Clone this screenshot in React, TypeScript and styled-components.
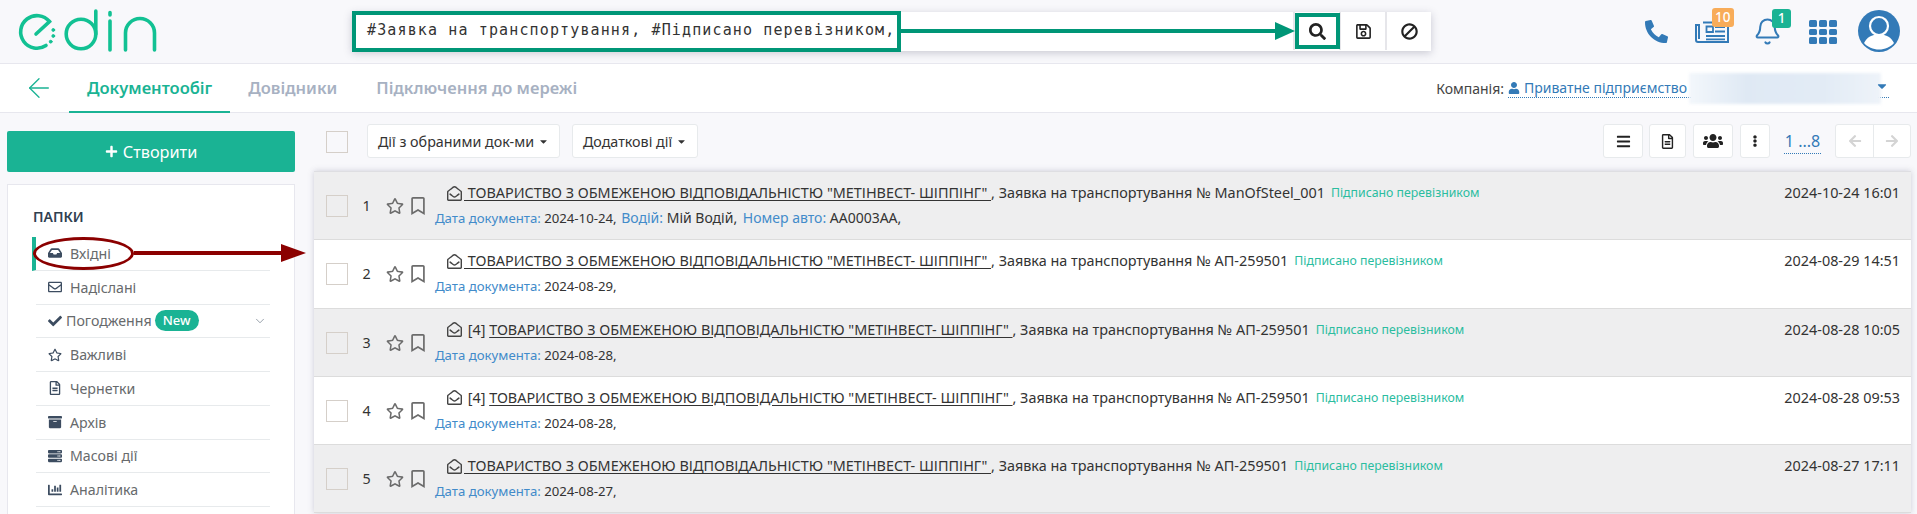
import React from 'react';
import styled, { createGlobalStyle } from 'styled-components';
import {
    FaArchive,
    FaArrowLeft,
    FaArrowRight,
    FaBan,
    FaBars,
    FaCaretDown,
    FaChartBar,
    FaCheck,
    FaEllipsisV,
    FaInbox,
    FaPhoneAlt,
    FaPlus,
    FaRegBookmark,
    FaRegEnvelope,
    FaRegEnvelopeOpen,
    FaRegFileAlt,
    FaRegSave,
    FaRegStar,
    FaSearch,
    FaServer,
    FaUser,
    FaUsers,
} from 'react-icons/fa';
import { ArrowLeft, Bell, ChevronDown } from 'lucide-react';

const GREEN = '#1ab394';
const LINK = '#337ab7';
const ANNOT_GREEN = '#009677';
const ANNOT_RED = '#8b0000';

const Global = createGlobalStyle`
    html, body {
        margin: 0;
        height: 514px;
        overflow: hidden;
        background: #f8f8fb;
        font-family: "Noto Sans", "Open Sans", sans-serif;
        font-size: 14px;
        color: #333;
    }
    * { box-sizing: border-box; }
`;

const Page = styled.div`
    width: 1917px;
    height: 514px;
    overflow: hidden;
`;

/* ---------- header ---------- */

const Header = styled.header`
    height: 64px;
    border-bottom: 1px solid #e7e7ee;
    display: flex;
    align-items: flex-start;
    padding-left: 10px;
`;

const LogoSvg = styled.svg`
    width: 160px;
    height: 60px;
    flex: none;
`;

const SearchBar = styled.div`
    position: relative;
    width: 1079px;
    height: 39px;
    margin: 12px 0 0 182px;
    display: flex;
    background: #fff;
    box-shadow: 0 2px 8px rgba(60, 60, 90, 0.25);
`;

const SearchText = styled.div`
    flex: 1;
    padding-left: 15px;
    line-height: 37px;
    font-family: "DejaVu Sans Mono", monospace;
    font-size: 15px;
    letter-spacing: 1.13px;
    white-space: pre;
`;

const SearchBtn = styled.div`
    width: 46px;
    height: 38px;
    border-left: 2px solid #e6e6ea;
    display: flex;
    align-items: center;
    justify-content: center;
    font-size: 17px;
    color: #222;
    background: #fff;

    svg.flip {
        transform: scaleX(-1);
    }
`;

const SearchHighlight = styled.div`
    position: absolute;
    left: 0;
    top: -1px;
    width: 549px;
    height: 41px;
    border: 4px solid ${ANNOT_GREEN};
`;

const SearchArrow = styled.div`
    position: absolute;
    left: 549px;
    top: 17px;
    width: 376px;
    height: 4px;
    background: ${ANNOT_GREEN};
`;

const SearchArrowHead = styled.div`
    position: absolute;
    left: 374px;
    top: -7px;
    border-left: 20px solid ${ANNOT_GREEN};
    border-top: 9px solid transparent;
    border-bottom: 9px solid transparent;
`;

const SearchBtnHighlight = styled.div`
    position: absolute;
    left: 943px;
    top: 1px;
    width: 45px;
    height: 36px;
    border: 4px solid ${ANNOT_GREEN};
`;

const HeaderIcons = styled.div`
    display: flex;
    align-items: center;
    margin-left: 214px;
    height: 62px;
    color: ${LINK};
`;

const HeaderIcon = styled.div<{ $size: number; $gap: number }>`
    position: relative;
    font-size: ${(p) => p.$size}px;
    margin-left: ${(p) => p.$gap}px;
    display: flex;
`;

const CountBadge = styled.span<{ $color: string; $right: number; $top: number }>`
    position: absolute;
    right: ${(p) => p.$right}px;
    top: ${(p) => p.$top}px;
    min-width: 19px;
    height: 19px;
    padding: 0 3.5px;
    border-radius: 3px;
    background: ${(p) => p.$color};
    color: #fff;
    font-size: 13.5px;
    line-height: 19px;
    text-align: center;
    font-weight: 500;
`;

const NewsSvg = styled.svg`
    width: 34px;
    height: 24px;
`;

const GridIcon = styled.div`
    display: grid;
    grid-template-columns: repeat(3, 8px);
    grid-auto-rows: 6.5px;
    gap: 2px;
    margin-left: 27px;
    margin-top: 2px;

    i {
        background: ${LINK};
        border-radius: 1.5px;
    }
`;

const AvatarSvg = styled.svg`
    width: 42px;
    height: 42px;
    margin-left: 21px;
`;

/* ---------- nav ---------- */

const Nav = styled.nav`
    height: 49px;
    background: #fff;
    border-bottom: 1px solid #e7e7ee;
    display: flex;
    align-items: stretch;
    padding-left: 23px;
    position: relative;
`;

const BackArrow = styled.div`
    display: flex;
    align-items: center;
    color: ${GREEN};
    width: 46px;
`;

const Tab = styled.div<{ $active?: boolean }>`
    padding: 0 18px;
    margin-right: ${(p) => (p.$active ? 0 : 3)}px;
    display: flex;
    align-items: center;
    font-size: 16.5px;
    font-weight: 600;
    color: ${(p) => (p.$active ? GREEN : '#a7b1c2')};
    border-bottom: 2px solid ${(p) => (p.$active ? GREEN : 'transparent')};
    margin-bottom: -1px;
`;

const Company = styled.div`
    margin-left: auto;
    margin-right: 28px;
    display: flex;
    align-items: center;
    gap: 4px;
    font-size: 14px;
    color: #444;
`;

const CompanyLink = styled.div`
    position: relative;
    width: 381px;
    height: 20px;
    display: flex;
    align-items: center;
    gap: 4px;
    color: ${LINK};
    border-bottom: 1px dotted ${LINK};
`;

const CompanyCaret = styled.span`
    position: absolute;
    right: 0;
    top: 1px;
    font-size: 14px;
    display: flex;
`;

const BlurPatch = styled.div`
    position: absolute;
    left: 181px;
    top: -5px;
    width: 192px;
    height: 31px;
    background: linear-gradient(90deg, #f3f7fb, #dfe9f4 30%, #e2ebf5 70%, #eef3f9);
    filter: blur(1.5px);
`;

/* ---------- main ---------- */

const Main = styled.main`
    display: grid;
    grid-template-columns: 314px 1fr;
`;

const Sidebar = styled.aside`
    padding: 18px 19px 0 7px;
`;

const CreateBtn = styled.div`
    height: 41px;
    background: ${GREEN};
    color: #fff;
    border-radius: 2px;
    display: flex;
    align-items: center;
    justify-content: center;
    gap: 5px;
    font-size: 16.3px;
`;

const FolderPanel = styled.div`
    margin-top: 12px;
    background: #fff;
    border: 1px solid #e7e7ee;
    height: 400px;
    padding: 21px 24px 0 24px;
`;

const PanelTitle = styled.div`
    font-size: 14px;
    font-weight: 600;
    color: #2f4050;
    line-height: 22px;
    margin-bottom: 9px;
    margin-left: 1px;
`;

const FolderItem = styled.div<{ $active?: boolean; $tight?: boolean }>`
    position: relative;
    height: 33.75px;
    margin-left: ${(p) => (p.$active ? 0 : 4)}px;
    padding-left: 12px;
    border-left: ${(p) => (p.$active ? `4px solid ${GREEN}` : 'none')};
    border-bottom: 1px solid #e7eaec;
    display: flex;
    align-items: center;
    gap: ${(p) => (p.$tight ? 4 : 8)}px;
    color: #676a6c;
    font-size: 14.2px;

    svg:first-child {
        color: #3c4c60;
        font-size: 14px;
        width: 14px;
    }
`;

const NewBadge = styled.span`
    margin-left: -1px;
    height: 21px;
    padding: 0 8px;
    border-radius: 11px;
    background: ${GREEN};
    color: #fff;
    font-size: 13px;
    font-weight: 500;
    line-height: 21px;
`;

const Chevron = styled.span`
    position: absolute;
    right: 3px;
    top: 2px;
    color: #8f9bab;
    display: flex;
`;

const RedEllipse = styled.div`
    position: absolute;
    left: -3px;
    top: 0;
    width: 101px;
    height: 33px;
    border: 3px solid ${ANNOT_RED};
    border-radius: 50%;
`;

const RedLine = styled.div`
    position: absolute;
    left: 98px;
    top: 14px;
    width: 148px;
    height: 3.5px;
    background: ${ANNOT_RED};
`;

const RedHead = styled.div`
    position: absolute;
    left: 245px;
    top: 7px;
    border-left: 25px solid ${ANNOT_RED};
    border-top: 9px solid transparent;
    border-bottom: 9px solid transparent;
`;

const Content = styled.section`
    padding-right: 7px;
`;

const Toolbar = styled.div`
    height: 58px;
    display: flex;
    align-items: flex-start;
    padding: 11px 0 0 12px;
`;

const Check = styled.div<{ $bg?: string; $top?: number }>`
    width: 22px;
    height: 22px;
    flex: none;
    margin-top: ${(p) => p.$top ?? 0}px;
    border: 1px solid #d5cfc9;
    background: ${(p) => p.$bg || 'transparent'};
`;

const Btn = styled.div<{ $w: number; $gap?: number }>`
    width: ${(p) => p.$w}px;
    height: 34px;
    margin-left: ${(p) => p.$gap ?? 0}px;
    flex: none;
    background: #fff;
    border: 1px solid #e7eaec;
    border-radius: 3px;
    display: flex;
    align-items: center;
    justify-content: center;
    gap: 4px;
    font-size: 14.3px;
    color: #333;
`;

const Caret = styled(FaCaretDown)`
    font-size: 11px;
`;

const Pager = styled.div`
    margin: 5px 0 0 14px;
    width: 37px;
    height: 25px;
    font-size: 16px;
    line-height: 24px;
    white-space: nowrap;
    color: ${LINK};
    border-bottom: 1px dotted ${LINK};
    text-align: center;
`;

const PagerGroup = styled.div`
    margin-left: 14px;
    display: flex;
    height: 34px;
    background: #fff;
    border: 1px solid #e7eaec;
    border-radius: 3px;
    color: #d4d4d4;
    font-size: 14px;
`;

const PagerCell = styled.div<{ $first?: boolean }>`
    width: 37px;
    display: flex;
    align-items: center;
    justify-content: center;
    border-left: ${(p) => (p.$first ? 'none' : '1px solid #e7eaec')};
`;

const DocList = styled.div`
    border-top: 1px solid #dedee2;
    box-shadow: 0 0 6px rgba(80, 80, 110, 0.25);
`;

const Row = styled.div<{ $shaded: boolean }>`
    position: relative;
    height: 68.25px;
    background: ${(p) => (p.$shaded ? '#eeeeef' : '#fff')};
    border-bottom: 1px solid #dcdcdc;
    display: flex;
    align-items: flex-start;
    padding: 23px 0 0 12px;
`;

const Num = styled.div`
    width: 15px;
    margin-left: 11px;
    line-height: 22px;
    font-size: 14.3px;
    color: #333;
    text-align: center;
`;

const RowIcons = styled.div`
    margin-left: 12px;
    width: 49px;
    display: flex;
    align-items: center;
    gap: 5px;
    height: 22px;
    color: #6b6b6b;
    font-size: 18px;
`;

const RowBody = styled.div`
    margin-top: -12px;
    flex: 1;
`;

const TitleLine = styled.div`
    height: 20px;
    line-height: 20px;
    padding-left: 12px;
    display: flex;
    align-items: center;
    white-space: pre;
    font-size: 14.4px;
    color: #333;

    svg {
        font-size: 15px;
        margin-right: 2px;
        color: #444;
    }

    u {
        text-underline-offset: 2px;
    }
`;

const Status = styled.span`
    margin-left: 6px;
    font-size: 12.3px;
    color: #2bbd9f;
`;

const MetaLine = styled.div`
    margin-top: 6px;
    font-size: 13.2px;
    line-height: 18px;
    color: #333;
    white-space: pre;

    b {
        font-weight: 400;
        color: #428bca;
    }
`;

const MetaExtra = styled.span<{ $gap: number }>`
    font-size: 14px;
    margin-left: ${(p) => p.$gap}px;

    b {
        font-size: 14px;
    }
`;

const RowTime = styled.div`
    position: absolute;
    right: 11px;
    top: 11px;
    line-height: 20px;
    font-size: 14.4px;
`;

const Logo = () => (
    <LogoSvg viewBox="0 0 160 60" fill="none" stroke="#12c193" strokeWidth="3.6" strokeLinecap="round">
        <path d="M36 45.5A16.3 16.3 0 1 1 39.5 21.5L26 34" />
        <circle cx="43.3" cy="30" r="1.4" fill="#12c193" strokeWidth="1" />
        <circle cx="43.3" cy="36" r="1.4" fill="#12c193" strokeWidth="1" />
        <circle cx="40.7" cy="41.7" r="1.4" fill="#12c193" strokeWidth="1" />
        <circle cx="71" cy="34" r="14.8" />
        <path d="M85.8 11V34" />
        <path d="M100 12.5V15M100 21V50" />
        <path d="M115.5 50V33A14.5 14.5 0 0 1 144.5 33V50" />
    </LogoSvg>
);

const NewsIcon = () => (
    <NewsSvg viewBox="0 0 34 24" fill="none" stroke="#337ab7" strokeWidth="2">
        <path d="M8 3.5H33V23H3A2 2 0 0 1 1 21V6H4" />
        <path d="M4 5V20" />
        <path d="M11.5 7.5H18V13H11.5Z" strokeWidth="1.8" />
        <path d="M20 8H30M20 12.5H30M11 17H30M11 20.3H30" strokeWidth="1.8" />
    </NewsSvg>
);

const Avatar = () => (
    <AvatarSvg viewBox="0 0 42 42">
        <circle cx="21" cy="21" r="21" fill="#337ab7" />
        <circle cx="21" cy="16" r="9" fill="none" stroke="#fff" strokeWidth="2.2" />
        <path d="M6 33c3-6 8-8 11-8h8c3 0 8 2 11 8-3.5 4-9 6.5-15 6.5S9.5 37 6 33z" fill="#fff" />
    </AvatarSvg>
);

type Doc = {
    n: number;
    count?: number;
    doc: string;
    date: string;
    time: string;
    extra?: boolean;
};

const docs: Doc[] = [
    { n: 1, doc: 'ManOfSteel_001', date: '2024-10-24', time: '2024-10-24 16:01', extra: true },
    { n: 2, doc: 'АП-259501', date: '2024-08-29', time: '2024-08-29 14:51' },
    { n: 3, count: 4, doc: 'АП-259501', date: '2024-08-28', time: '2024-08-28 10:05' },
    { n: 4, count: 4, doc: 'АП-259501', date: '2024-08-28', time: '2024-08-28 09:53' },
    { n: 5, doc: 'АП-259501', date: '2024-08-27', time: '2024-08-27 17:11' },
];

const folders = [
    { icon: <FaRegEnvelope />, label: 'Надіслані' },
    { icon: <FaCheck />, label: 'Погодження', isNew: true },
    { icon: <FaRegStar />, label: 'Важливі' },
    { icon: <FaRegFileAlt />, label: 'Чернетки' },
    { icon: <FaArchive />, label: 'Архів' },
    { icon: <FaServer />, label: 'Масові дії' },
    { icon: <FaChartBar />, label: 'Аналітика' },
];

export default function App() {
    return (
        <Page>
            <Global />
            <Header>
                <Logo />
                <SearchBar>
                    <SearchText>#Заявка на транспортування, #Підписано перевізником,</SearchText>
                    <SearchBtn>
                        <FaSearch />
                    </SearchBtn>
                    <SearchBtn>
                        <FaRegSave />
                    </SearchBtn>
                    <SearchBtn>
                        <FaBan className="flip" />
                    </SearchBtn>
                    <SearchHighlight />
                    <SearchArrow>
                        <SearchArrowHead />
                    </SearchArrow>
                    <SearchBtnHighlight />
                </SearchBar>
                <HeaderIcons>
                    <HeaderIcon $size={23} $gap={0}>
                        <FaPhoneAlt />
                    </HeaderIcon>
                    <HeaderIcon $size={24} $gap={27}>
                        <NewsIcon />
                        <CountBadge $color="#f8ac59" $right={-5} $top={-11}>
                            10
                        </CountBadge>
                    </HeaderIcon>
                    <HeaderIcon $size={28} $gap={24}>
                        <Bell size={29} strokeWidth={1.7} />
                        <CountBadge $color={GREEN} $right={-9} $top={-8}>
                            1
                        </CountBadge>
                    </HeaderIcon>
                    <GridIcon>
                        {Array.from({ length: 9 }, (_, i) => (
                            <i key={i} />
                        ))}
                    </GridIcon>
                    <Avatar />
                </HeaderIcons>
            </Header>

            <Nav>
                <BackArrow>
                    <ArrowLeft size={32} strokeWidth={1} />
                </BackArrow>
                <Tab $active>Документообіг</Tab>
                <Tab>Довідники</Tab>
                <Tab>Підключення до мережі</Tab>
                <Company>
                    <span>Компанія:</span>
                    <CompanyLink>
                        <FaUser size={12} />
                        Приватне підприємство
                        <BlurPatch />
                        <CompanyCaret>
                            <FaCaretDown />
                        </CompanyCaret>
                    </CompanyLink>
                </Company>
            </Nav>

            <Main>
                <Sidebar>
                    <CreateBtn>
                        <FaPlus size={13} />
                        Створити
                    </CreateBtn>
                    <FolderPanel>
                        <PanelTitle>ПАПКИ</PanelTitle>
                        <FolderItem $active>
                            <FaInbox />
                            Вхідні
                            <RedEllipse />
                            <RedLine />
                            <RedHead />
                        </FolderItem>
                        {folders.map((f) => (
                            <FolderItem key={f.label} $tight={f.isNew}>
                                {f.icon}
                                {f.label}
                                {f.isNew && <NewBadge>New</NewBadge>}
                                {f.isNew && (
                                    <Chevron>
                                        <ChevronDown size={28} strokeWidth={0.9} />
                                    </Chevron>
                                )}
                            </FolderItem>
                        ))}
                    </FolderPanel>
                </Sidebar>

                <Content>
                    <Toolbar>
                        <Check $top={7} />
                        <Btn $w={193} $gap={19}>
                            Дії з обраними док-ми <Caret />
                        </Btn>
                        <Btn $w={126} $gap={12}>
                            Додаткові дії <Caret />
                        </Btn>
                        <Btn $w={40} $gap={905}>
                            <FaBars size={15} color="#222" />
                        </Btn>
                        <Btn $w={37} $gap={6}>
                            <FaRegFileAlt size={15} color="#222" />
                        </Btn>
                        <Btn $w={40} $gap={7}>
                            <FaUsers size={20} color="#222" />
                        </Btn>
                        <Btn $w={30} $gap={7}>
                            <FaEllipsisV size={12} color="#222" />
                        </Btn>
                        <Pager>1 ...8</Pager>
                        <PagerGroup>
                            <PagerCell $first>
                                <FaArrowLeft />
                            </PagerCell>
                            <PagerCell>
                                <FaArrowRight />
                            </PagerCell>
                        </PagerGroup>
                    </Toolbar>

                    <DocList>
                        {docs.map((d) => (
                            <Row key={d.n} $shaded={d.n % 2 === 1}>
                                <Check $bg={d.n % 2 === 1 ? '#eeeeef' : '#fff'} />
                                <Num>{d.n}</Num>
                                <RowIcons>
                                    <FaRegStar />
                                    <FaRegBookmark />
                                </RowIcons>
                                <RowBody>
                                    <TitleLine>
                                        <FaRegEnvelopeOpen />
                                        {d.count ? (
                                            <>
                                                {` [${d.count}] `}
                                                <u>ТОВАРИСТВО З ОБМЕЖЕНОЮ ВІДПОВІДАЛЬНІСТЮ "МЕТІНВЕСТ- ШІППІНГ" </u>
                                            </>
                                        ) : (
                                            <u> ТОВАРИСТВО З ОБМЕЖЕНОЮ ВІДПОВІДАЛЬНІСТЮ "МЕТІНВЕСТ- ШІППІНГ" </u>
                                        )}
                                        {`, Заявка на транспортування № ${d.doc}`}
                                        <Status>Підписано перевізником</Status>
                                    </TitleLine>
                                    <MetaLine>
                                        <b>Дата документа:</b> {d.date},
                                        {d.extra && (
                                            <>
                                                <MetaExtra $gap={1}>
                                                    <b> Водій:</b> Мій Водій,
                                                </MetaExtra>
                                                <MetaExtra $gap={2}>
                                                    <b> Номер авто:</b> АА0003АА,
                                                </MetaExtra>
                                            </>
                                        )}
                                    </MetaLine>
                                </RowBody>
                                <RowTime>{d.time}</RowTime>
                            </Row>
                        ))}
                    </DocList>
                </Content>
            </Main>
        </Page>
    );
}
